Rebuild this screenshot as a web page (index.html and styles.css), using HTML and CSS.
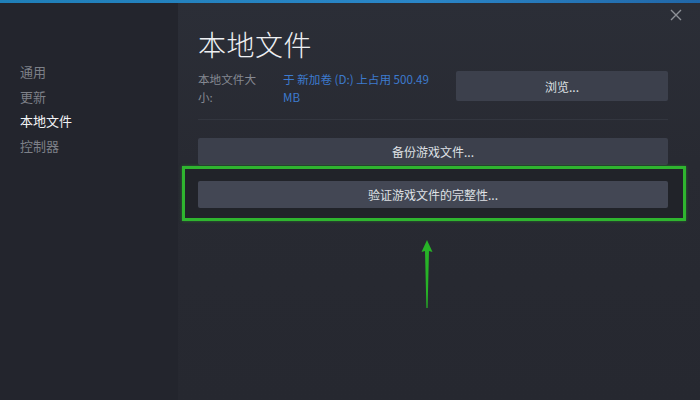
FILE: index.html
```html
<!DOCTYPE html>
<html lang="zh">
<head>
<meta charset="utf-8">
<link rel="stylesheet" href="styles.css">
</head>
<body>
<div class="topline"></div>
<div class="window">
  <nav class="sidebar">
    <div class="nav-item">通用</div>
    <div class="nav-item">更新</div>
    <div class="nav-item active">本地文件</div>
    <div class="nav-item">控制器</div>
  </nav>
  <main class="main">
    <h1 class="title">本地文件</h1>
    <div class="size-row">
      <div class="size-label">本地文件大小:</div>
      <div class="size-value">于 新加卷 (D:) 上占用 500.49 MB</div>
      <button class="btn browse">浏览...</button>
    </div>
    <div class="sep"></div>
    <button class="btn wide">备份游戏文件...</button>
    <div class="highlight">
      <button class="btn wide">验证游戏文件的完整性...</button>
    </div>
    <div class="arrow-wrap">
      <svg class="arrow" width="14" height="70" viewBox="0 0 14 70">
        <path d="M7 0 L12.5 12 L9 11 L7.6 68 L6.4 68 L5 11 L1.5 12 Z" fill="#27b327"/>
      </svg>
    </div>
  </main>
  <div class="close">
    <svg width="14" height="14" viewBox="0 0 14 14"><path d="M2 2 L12 12 M12 2 L2 12" stroke="#8e9197" stroke-width="1.4"/></svg>
  </div>
</div>
</body>
</html>
```
FILE: styles.css
```css
* { box-sizing: border-box; }
html, body { margin: 0; padding: 0; }
body {
  width: 700px;
  height: 400px;
  overflow: hidden;
  background: #24262e;
  font-family: "Noto Sans CJK SC", "Noto Sans", sans-serif;
}
.topline {
  height: 3px;
  background: linear-gradient(90deg, #1f7fb8, #2a86c8 60%, #2167a8);
}
.window {
  position: relative;
  display: flex;
  height: 397px;
}
.sidebar {
  width: 178px;
  flex: none;
  background: #23252d;
  padding: 59px 0 0 20px;
  display: flex;
  flex-direction: column;
  gap: 4.7px;
}
.nav-item {
  font-size: 13px;
  line-height: 20px;
  color: #7d8088;
}
.nav-item.active { color: #f2f3f5; }
.main {
  flex: 1;
  background: linear-gradient(180deg, #2b2e37 0%, #282a32 40%, #262830 100%);
  padding: 22px 32px 0 20px;
  position: relative;
}
.title {
  margin: 0;
  font-size: 28px;
  font-weight: 300;
  line-height: 38px;
  color: #eef0f3;
  letter-spacing: 0.5px;
}
.size-row {
  display: flex;
  margin-top: 7px;
  align-items: flex-start;
}
.size-label {
  width: 61px;
  font-size: 11.6px;
  line-height: 18px;
  color: #858992;
  margin-right: 24px;
}
.size-value {
  width: 163px;
  font-size: 11.6px;
  line-height: 18px;
  color: #3d7bcf;
  margin-right: 10px;
}
.btn {
  display: block;
  border: none;
  background: #3c404c;
  color: #dfe1e5;
  font-family: "Noto Sans CJK SC", "Noto Sans", sans-serif;
  font-size: 12px;
  padding: 0;
  border-radius: 2px;
}
.browse {
  width: 212px;
  height: 30px;
  margin-top: 1px;
}
.sep {
  height: 1px;
  background: #33363f;
  margin: 13px 0 18px;
}
.wide {
  width: 470px;
  height: 27px;
}
.highlight {
  margin: 1px -18px 0 -16px;
  border: 3px solid #2fb52f;
  padding: 12px 15px 10px 13px;
  background: #212329;
  box-shadow: 0 0 3px rgba(40, 180, 40, 0.5);
}
.highlight .btn { background: #434754; }
.arrow-wrap {
  display: flex;
  justify-content: center;
  margin-top: 19px;
  padding-right: 12px;
}
.close {
  position: absolute;
  top: 0;
  right: 17px;
}
```
